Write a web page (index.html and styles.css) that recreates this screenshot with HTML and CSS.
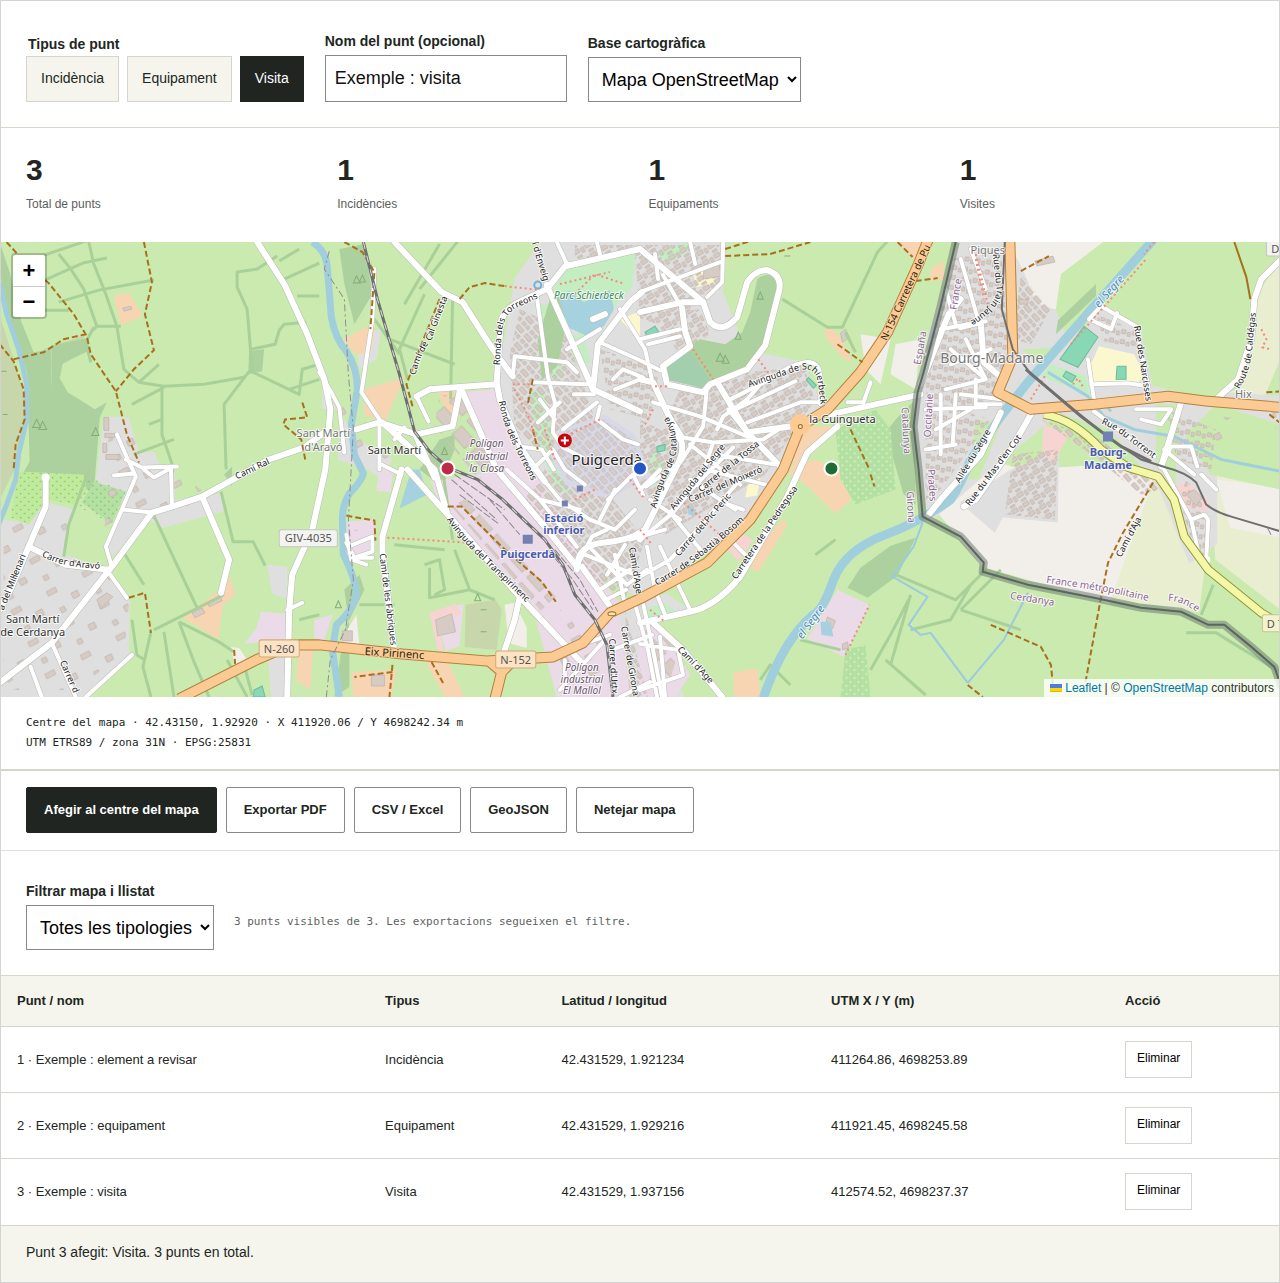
FILE: index.html
```
<!DOCTYPE html>
<html lang="ca">
<head>
<meta charset="utf-8">
<meta name="viewport" content="width=device-width, initial-scale=1">
<title>Mapa de punts</title>
<link rel="stylesheet" href="styles.css">
</head>
<body>
<main class="app">
  <form class="setup">
    <fieldset class="field types">
      <legend>Tipus de punt</legend>
      <div class="type-list">
        <button type="button" class="type">Incidència</button>
        <button type="button" class="type">Equipament</button>
        <button type="button" class="type type-on" aria-pressed="true">Visita</button>
      </div>
    </fieldset>
    <div class="field">
      <label for="nom">Nom del punt (opcional)</label>
      <input id="nom" class="text-box" type="text" value="Exemple : visita">
    </div>
    <div class="field">
      <label for="base">Base cartogràfica</label>
      <select id="base" class="select select-base"><option>Mapa OpenStreetMap</option></select>
    </div>
  </form>

  <section class="stats">
    <div class="stat"><strong>3</strong><span>Total de punts</span></div>
    <div class="stat"><strong>1</strong><span>Incidències</span></div>
    <div class="stat"><strong>1</strong><span>Equipaments</span></div>
    <div class="stat"><strong>1</strong><span>Visites</span></div>
  </section>

  <section class="map" aria-label="Mapa">
    <svg class="map-canvas" viewBox="1 243 1278 454" preserveAspectRatio="xMidYMid slice">
      <defs>
        <pattern id="b1" width="13" height="11" patternUnits="userSpaceOnUse" patternTransform="rotate(-32)"><path class="bld" d="M1 1h6v4h-6zM9 2h3v5h-3zM2 8h5v2h-5z"/></pattern>
        <pattern id="b2" width="12" height="13" patternUnits="userSpaceOnUse" patternTransform="rotate(48)"><path class="bld" d="M1 1h8v4h-8zM2 8h4v3h-4zM8 8h3v3h-3z"/></pattern>
        <pattern id="b3" width="11" height="10" patternUnits="userSpaceOnUse" patternTransform="rotate(8)"><path class="bld" d="M1 1h4v4h-4zM7 3h3v4h-3z"/></pattern>
        <pattern id="b4" width="40" height="36" patternUnits="userSpaceOnUse" patternTransform="rotate(-28)"><path class="bld" d="M4 5h10v5h-10zM25 18h7v6h-7zM8 26h5v5h-5z"/></pattern>
        <pattern id="b5" width="26" height="20" patternUnits="userSpaceOnUse" patternTransform="rotate(48)"><path class="bld" d="M2 2h19v13h-19z"/></pattern>
        <pattern id="dots" width="8" height="8" patternUnits="userSpaceOnUse"><circle cx="2" cy="2" r=".7" fill="#6fa868"/><circle cx="6" cy="6" r=".7" fill="#6fa868"/></pattern>
        <pattern id="wdots" width="8" height="8" patternUnits="userSpaceOnUse"><circle cx="2" cy="2" r=".8" fill="#e6f5da"/><circle cx="6" cy="6" r=".8" fill="#e6f5da"/></pattern>
      </defs>
      <rect class="field-green" x="1" y="243" width="1278" height="454"/>

      <!-- land cover -->
      <g class="scrub">
        <path d="M1 315l14 45 12 40-1 25-10 45-15 30zM45 350l40-14 5 14-38 22-20 30-2-25zM466 605l30-5 6 10-5 40-32-3z"/>
      </g>
      <g class="wood">
        <path d="M1 243l10 30 12 50 12 30 17-3 1 37-22 5-3-20-8-25-11-35-8-40z"/>
        <path d="M29 392l24-6 0-40 36-7 2 12-27 13-3 15 8 14 27 17 12-7-7 15-6 75-22-10-56 4 14-25z"/>
        <path d="M250 352l15-2-2 22-14 3zM340 250l25-5 8 50-18 30-10-40zM420 470l20-30 15-5 0 15-10 25 5 18zM895 420l20-20 0 105-12-10-18-62zM345 590l15-15 5 15-20 40-10 67 15-10 0-60zM225 475l8-8v20z"/>
      </g>
      <path class="farm" d="M1153 478l18 22 12 40 20 32-5 40-100-14 12-55zM1262 400l17 5v205l-65-50-4-80-10-100 40-60 39-60v100z" opacity=".9"/>
      <path class="bare" d="M1012 243h90l-42 32-5 35-20-2-15-30-8-10zM960 450l60 20 85-5 48 14-45 125-126-37-52-62zM505 605l10-2 12 25 0 20-18-5zM345 635l12-20 3 30-20 3zM1215 480l64 8v50l-50-10zM895 345l25-5-5 50-25-15zM860 335l30 5-10 45-15-15zM232 647l8 1 10 15-14 5z"/>
      <g class="res">
        <path d="M1 520l27 3 20-20 27 7-9 45 45 15 20 28-1 57-45 42H1zM105 417l25 1 10 34 16 1 5 14 15 0 0 33 48-6 0 18-60 16-15-8-34 36-8-6 18-45-28-25z"/>
        <path d="M537 243h190l-4 50 20 52 60 18 18 40-35 66-42 58-104 72-86-50-54-80-15-60 20-70 10-60 25-35z"/>
        <path d="M557 697l50-95 60-8 22 16-38 16 33 71zM357 335l25-5-5 30-17 10zM323 385l15 25 20 30 35 20-10 20-15-10-30-10 5-50-20 0zM268 565l20 2v32l-15-5zM268 645l20-10-2 62h-14z"/>
        <path d="M958 243h50l15 30 12 30 20 8 10 25 30-32 44 23 12 60 60 5 75 5-30 25-30-8-10 50 0 80-28 20-30-75-50-60-50-15-60 50-70 60-10-70-5-50 15-70z"/>
        <path d="M1010 470l48-22-1 75-55-5-8 15-35-30zM1245 405h34v20l-30 5z"/>
      </g>
      <g class="field-green">
        <path d="M1108 243h171v15l-22 25-7 62-15 45-25 10-52-12-8-60-44-24-28 30-6-25 8-40zM1155 405l25 0-5 60 0 20-20-20zM1215 405l64 20v65l-70-15-25-40zM975 420l25 5-22 55-10 0zM430 400l35 0-8 24-30 4zM1021 350l40-2-20 22zM780 300l20 62-38-8z"/>
      </g>
      <g class="ind">
        <path d="M461 393l36-3 20 40 30 65 25 45 45 60 12 97h-72l-23-85-88-95-15-35 60-10zM348 522l28-2-2 40-28-5zM262 612l26 2-3 25-40 5 12-15zM837 590l32 15-25 52-37-18zM380 470l14-1-3 24-14-2zM436 612l28-8-4 42-14 5zM315 620l18-5-8 25h-10zM640 625l20 0 30 50-15 22h-38z"/>
      </g>
      <path class="retail" d="M430 613l26-9 6 10-22 10 4 28-6-2zM1175 485l15 0 18 17-2 10-25-5zM1043 425l25 10-15 28-12-10zM735 530l18 10-15 22-12-15z"/>
      <path class="yard" d="M115 297l15-3 14 23-22 9zM362 330l14-5-5 30-15 0-12-15zM365 390l40-12-20 45-20-8zM455 392h-17l15 33zM184 618l37-28 10-13 5 18-12 10-5 34zM352 672l45-2-5 27h-38zM425 660l20-5 20 42h-20zM742 565l40-45 6 4-30 48zM785 470l30-10 22 10 14 30-16 14-25-25zM300 640l14 5-3 45-14-10zM733 673l24-5 3 29h-26zM825 328l12 5 15 30-10-5-17-20zM895 243l35 0-8 25zM930 270l12-8 2 18-15 2zM800 427l35 0-30 30-15 20z"/>
      <path class="park" d="M553 290l17-24 66-12-4 34-34 38-14 18-18-30zM652 450l12 15-5 30-10-20zM640 610l25-7 10 8-25 15zM1050 365l35 12 5 20-50-20zM530 390l15 5 10 50 15 50-15-5-20-60zM540 305l12 0 12 75-22-5zM564 330l20 10 8 25-18-5zM655 255l30-12 10 5-25 15z"/>
      <path class="school" d="M1098 347l35 8 10 20-5 8h-45l-6-12zM693 273l25-8-2 20-20 3zM748 484l12-6-3 18-12 2zM620 320l20-8v30z"/>
      <path class="orchard-a" d="M20 472l65 3 3 15-10 15-30-5-18 25-18-7z"/>
      <path class="orchard-b" d="M95 482l32 10-14 32-30-21zM835 430l40-20 15 20 5 60-40 15-15-25zM845 650l20-5 5 52h-30z"/>
      <path fill="url(#dots)" d="M20 472l65 3 42 17-14 32-40-20-25-4-18 25-18-7z"/>
      <path fill="url(#wdots)" d="M835 430l40-20 15 20 5 60-40 15-15-25zM845 650l20-5 5 52h-30z"/>

      <!-- buildings -->
      <path fill="url(#b1)" d="M575 246h145v45l-20 5-25 35-35-12-5-65-60 8zM650 315l50-5 10 25-30 20zM680 390l120-25 15 35-50 75-100 60-25-60zM640 420l40 20-10 50-30 0zM745 373l60-5 5 30-60 25zM1012 455l45-5-3 70-50-5z"/>
      <path fill="url(#b2)" d="M520 310l45 20 30 90-20 60-60-50-5-75zM545 470l60 20 40 50-20 60-60-40-40-60zM1040 420l60 20 60 50-20 5-50-40zM1020 275l30 35-20 35-18-5zM625 610l25 95h-20z"/>
      <path fill="url(#b3)" d="M950 260l50-10 8 100-15 50-65 20-5-60 20-60zM925 400l65 20-50 70-15 10zM1165 410l50 20-5 40-35-10zM1185 480l15 20 8 60-15-10-15-50zM600 350l60 20-10 50-40-10zM1095 315l38 15 5 20-35-8z"/>
      <path fill="url(#b4)" d="M5 525l65-10-5 45 45 15 20 30-5 50-50 35H5zM110 425l25 5 10 30 30 10 40 30-60 20-20-10-30 40zM335 400l40 30 15 30-45-8zM350 530l20 0v30zM1245 405l30 5v20zM1180 410l60 10-20 25zM560 610l45 20-5 55-40-20z"/>
      <path fill="url(#b5)" d="M452 507l14-8 90 98-15 14zM440 396l20 0 35 60-15 25-45-55zM645 630l35 15-10 35-20 0z"/>
      <path class="core" d="M560 430l45-15 30 20 15 40-40 25-45-15-15-30z"/>
      <path fill="url(#b2)" opacity=".8" d="M565 432l40-12 28 20 10 35-35 20-40-15-12-25z"/>
      <path class="bld" d="M124 309l8-2 1 3-8 2zM105 418h5v13h-5zM106 434h10v4h-10zM104 444h4v9h-4zM107 455h13v5h-13zM209 602l12-6 2 5-13 6zM193 613l10-5 3 5-10 5zM98 600l10-7 6 4-12 12zM372 675h13v11h-13zM436 620l16-6 4 18-18 4zM343 631h10v10h-10zM704 268l15-2 2 11-18 3zM1034 262l18-5 2 6-18 4zM1018 300l9 0v5h-9zM1185 495l8-5 8 8-6 8zM840 334l5-4 4 8-7 5zM827 617l8 4-3 8-7-4zM842 644l5-2 1 6-6 2z"/>

      <!-- woods and water inside the towns -->
      <path class="wood" d="M757 280q8-6 16-3l4 8-2 22-15 46-12 18-38 12-42-2-5-13 27-22 10-6 25 5 17-12 8-20zM550 300l14-4 2 30-8 40-16 15-4-40zM1055 335l40-38 0-12-38 36z"/>
      <path class="park-dark" d="M666 366l25-14 20 32-8 5-34-8z"/>
      <path class="wood" d="M860 568l30-22 25-8 -18 38-30 22-20-10z"/>
      <path class="water" d="M558 295l12-3 14 11 26-12 4 19-10 17-16 10-20-9zM412 470l8 0 8 25-28 14zM820 622l10 0 3 15-12-2zM688 507l6 0 0 9-6-1z"/>
      <path class="pitch" d="M1083 327l14 11-20 30-18-8zM1116 367l9 0v13h-10zM645 333l10-6 4 6-11 6zM1065 372l10 5-4 6-9-6zM808 378l8 8-3 3-7-8zM657 447l8-2v6l-8 2zM255 690l8-4 3 11h-12z"/>

      <!-- hedges -->
      <g class="hedge">
        <path d="M90 243l5 22 12 30 11 32 7 43 15 13 25 4 40-2 40-7 8-8-5-60-10-22 0-15 20-3 20-13M60 255l12 15 13 20 13 37h24M46 256l44-15M46 281l38-17 24-5M60 303l40-12 55-10M40 311l30 0M95 328l-8 15 5 20M98 327l-5 5M252 372l48 23 3-25 17-5M252 350l24-5 4-14 5-6 22-2M285 280l35-16M298 297h22M280 262l20-12M250 372l-25 33 2 65M163 386v49l12 35M165 388l-32 17M140 383l20-18M163 420l-13 5M175 440l-40 15M320 380l-30 10"/>
        <path d="M90 470l-20 55-5 32M125 553l20 32M155 516l43 92M152 632l-8 35 8 30M165 632l10 65M180 622l15 40 15 35M155 630l70-35M180 622l40 20 15 10M222 492l12 50 20 0 12 24M245 665l8 30M133 620l5 35 8 5M320 615l-20 5M228 660l20 37" />
        <path d="M420 290l40-50M425 295l-25 55 8 30M390 340l65 25M453 300l-2 100M440 245l-35 60M375 320l25 35M443 470l10 70M425 565l15-5 5 30-10 5M430 568v30l40-8 -15-40M470 590l25 10M395 545l50 5M360 605l35 0"/>
        <path d="M782 300l45 28 15 0 35-75 12-13M845 333l10 20M835 540l-20 15M895 575l60 25 30-30M870 670l20-35 18-35M885 660l40 35M890 665l20-70M910 630l40-10 20-35M1000 570l-40 40M760 680l10-15 20 20M800 640l40 10M1200 615l12-30M1185 633l30 0 65 40M960 610l60 20"/>
      </g>
      <path class="tree" d="M34 428l4-8 4 8zM40 430l4-8 4 8zM93 436l4-8 3 8zM354 284l3-7 4 7zM360 283l3-7 3 7zM442 455l3-7 3 7zM716 362l4-8 4 8zM722 364l3-8 4 8zM757 300l3-7 3 7zM735 340l3-7 3 7zM3 372h5M4 415h5M481 610h6M481 632h6M784 257h6M336 608l3-7 3 7zM475 601l3-7 3 7z"/>

      <!-- rivers -->
      <g class="river">
        <path class="w4" d="M1 283l7 32 12 35 8 35v35l-8 35-3 25-9 25-8 20"/>
        <path class="w6" d="M313 243Q327 252 328 268L332 318Q336 340 347 352Q358 368 358 390L352 425L355 455L364 474Q362 482 350 494Q343 505 343 520L344 555Q357 580 357 598Q350 614 337 625L333 650L340 697"/>
        <path class="w9" d="M1153 240l-60 67-66 76-27 34-30 43q-10 25-20 40-30 22-65 35-40 15-52 45-10 30-20 35-30 25-50 83"/>
        <path class="w2" d="M1047 373l40 24 16 20 30 13 40 7 47 23 60 12M1100 400l10 12"/>
        <path class="w1" d="M922 523l-9 24-21 30 35 20-19 28 12 10 10-2 37 50M1027 593l-24 47-36 43"/>
      </g>

      <!-- white roads: casing below, fill above -->
      <g class="casing"><use href="#major"/></g>
      <g class="casing-s"><use href="#minor"/></g>
      <g class="street"><g id="minor">
        <path d="M537 297l11 80 7 26-2 30 10 15 20 10M563 430l34-27M533 383l54 2M515 357l-2 20M515 357l52 6 10 10M557 243l10 22M597 243l3 12M600 343l40 18 20 10M600 407l-3 13 26 20 15 5M560 403l-22 20M540 400l15 20M567 350l33-20M613 380l10-10 20 8M574 395h20M640 380l-25 10M655 255l3 25M663 276l20 35M640 293l80-30M723 243l-1 40-15 15M690 243l5 22M640 340l40-10M620 310l25 40 8 35M648 345l32-8"/>
        <path d="M653 403l47 14 47 20M667 413l16 25 30 5 50-3 20-13M707 387l-4 40-22 35-35 25M717 430l6-13 24-17 20-23M747 423l53-20h20M730 400l50-25M735 410l60-28M780 373q20-12 30-10t10 15v27M847 403h16l7-20M713 443l-10 30-33 40 33 40M660 470l-20 20M690 480l45 30M723 503l20 7M730 540l17 17M640 577l30-17 27-30 43-50M647 547l8 43 10 25M660 547l17 36 13 27M643 603l10 47 9 47M636 608l12 42 9 47M640 690l43-15-5-25-38-6M640 540l33-27 20-25 40-40M728 410l20 25M705 470l60 15M715 455l60 10M650 500l30 20M630 540l35-10M690 445l50 40"/>
        <path d="M507 470l33 30 37 47M523 455l37 45 30 20 25 10 20-20M533 470l20-20 12 20 20 15M608 500l25-25 10 20M600 520l15-30M577 567l15-30 15-7M592 550l35 35 20-15M600 590l30-20M585 555l55 22M606 600l20-10M540 500l40 10M625 545l-18 30M615 555l10 50M520 447l22 3 12 20"/>
        <path d="M127 460l16 8 35-1M173 507l-1-37M123 510l30 3M113 567l-6-20 16-37 14-33-9-19-10-23M110 573l18 25M53 643l24 54M32 667l11 30M87 697l46-42M145 470l10 8 18-10M115 476l20-2M375 270l-2 50-11 73 18 27 0 50M320 373l12 20 8 15 5 45M417 397l12 25M347 543l8 15 18-6 0-15-24 10M355 558l18 0M347 535l5 25 15 5M402 475l-20-10M395 440l10-12M288 610l15-7M565 650l45-15M560 690l45-50M565 660v30M612 650l40-15M665 697l-5-60M620 697l30-15"/>
        <path d="M1088 320l12-13 35 20 12 60-20-3-37 1M1088 320l22 10 6-16M1087 360l6 40M960 260l20 70M970 250l15 40M945 290l10 35M940 330l45-8M950 350l35 30-40 10M965 340l20 40M925 410l60-2M935 430l35-20M940 395v60M955 395l-3 50M925 450l30-5M975 380v25h25M990 350l-40 15M1135 410l35 0-10 15-20-5M1160 467l10-20 20 0 6 20M1163 470l27 50 8 37M1190 520l13-5 4 5-2 40M1200 475l15 15M1093 412l60 45M1045 408l30 18 25 20M960 395l40 5M1163 450l30 25"/>
      </g></g>
      <g class="road"><g id="major">
        <path d="M258 243l27 42 23 50 17 45 6 30-5 60-13 60-20 45-3 35-2 87"/>
        <path d="M395 243l47 50 21 10 30 47 20 27M547 290l-28 13q-15 8-18 20l-4 60 3 17 20 47 25 35M430 390l67-5M417 397l13-7M460 392l-7 35-36 8-37-12-23 7M463 393l34 77 48 57 32 40M383 423l52 47 13 45 72 82 62 66M408 470l40 45M402 470l-19 67v16l12 100M520 597l-5 23-11 33M415 433l20 45"/>
        <path d="M567 267l73-17 63 53M547 290l20-25M547 286l46 104 47 22M593 390l5-45 32-42 12-10M593 320l12-5"/>
        <path d="M640 313l43-10h20l7 20q12 12 27-5l10-35q8-12 20-12 15 5 12 20l-14 55-18 24-37 15-7 8-36-8-4-18 27-20-5-15-3-23M640 380l13 3 14 30 12 25q8 10-4 32l-20 40-15 30M717 383l30 50 36 37M747 433l43-6M577 570q0-25 26-27t40-12M582 567l27 38"/>
        <path d="M830 415l90-20M837 427l-30 26-20 44-47 80q-25 30-50 35l-50 11M653 623l30 27 39 47"/>
        <path d="M1280 260l-20 20-7 20-3 40-13 40-22 20M1180 403l-20 64M960 328l20-5 3 40 17 15M1030 415l-20 35-35 50-12 7M1000 413l-20 42-40 45-12 15M920 385l20-50 8-20 12-15"/>
        <path d="M47 477v30l-17 40-17 40-12 23M30 547l37 18 43 5M1 683l52-40 60-76 40-54 20-6 30-10 67-37 35-12 20-15M203 497l27 63-8 33"/>
      </g></g>
      <circle cx="47" cy="478" r="4" fill="#fff"/><circle cx="1205" cy="560" r="4" fill="#fff"/>

      <!-- classified roads -->
      <path class="yellow-case" d="M1043 415q30 5 57 35l27 18 30 9 16 23 10 37 24 33 53 43 20 12"/>
      <path class="yellow" d="M1043 415q30 5 57 35l27 18 30 9 16 23 10 37 24 33 53 43 20 12"/>
      <g class="orange-case"><use href="#primary"/></g>
      <g class="orange"><g id="primary">
        <path d="M180 699l77-39 35-15h28l83 9 84 7 66-4 30-14 27-30 30-14 67-36 43-43 33-50 17-43 27-17 33-37 27-40 30-66 12-30M495 700l7-28-14-12M502 672l14-14M1009 240l3 117-15 36 33 17 63-5 74-8 40 5 73 6"/>
      </g></g>
      <circle class="orange" cx="800" cy="425" r="6"/>
      <circle class="ring" cx="800" cy="427" r="2"/><ellipse class="ring" cx="612" cy="614" rx="4" ry="2"/>
      <circle cx="538" cy="286" r="3.500" fill="none" stroke="#6fb2dc" stroke-width="2"/>

      <!-- paths and tracks -->
      <g class="track">
        <path d="M8 243l17 19 25 22 25 31 13 22 4 18 25 37 11 43 12 28M145 243l8 40-7 32 9 36-20 19-18 22M15 360l30-7 20-13 22-5M1 345l14 17 10 28 1 30-9 25-2 25M306 460l-4-20-18-15 2-5 22-2-5-15M130 598l16-5 6 40M235 650l1 14M345 243l18 10 12 20-4 57M440 300l-20 50-13 35 6 22M460 300l10-12 15-4 20 3M448 507h14l40 40 40 35 14 20M347 516l28 5 1 20M393 665l-3 32M393 672l-38 5M432 662l12 22M850 430l18 38M870 475l4 12M1152 483l-30 50-15 30-8 40-15 82M990 625l50 22 10 18 2 20M967 685l15 12M725 257l45-2 40-12M725 250l25-8M837 345l25 18M897 243l15 15M915 282l22-3M1020 272l28-15M1265 393l14-1M1268 415l15 12M533 380l-5 25M533 430l5 20"/>
        <path class="solid" d="M1233 243l12 35 4 22"/>
      </g>
      <path class="foot" d="M505 287l35 4M388 538l80 5M513 385l20 0M515 390l15 30 6 20M560 285l50-12M575 295l20-20 30 10M693 350l20 30M1070 345l75-85M1153 243l-10 12M845 655l24-50M680 500l45 40M650 610l15 12M975 255l12 50M600 420l-30 15M630 480l15 20M655 387l12 0M1030 400l15-25M575 500l20-10M545 430l10 30M653 410l-8 15M758 360l15 20M640 530l12 15M975 260l8 40M1072 385l5-6 6 10M1260 330l5 10-4 8 8 2"/>
      <path class="admin" d="M330 252l-5 18 20 30 4 75 5 55-5 90 5 60-8 50-15 30-4 37"/>

      <!-- railways -->
      <g class="rail">
        <path d="M364 243l14 57 22 75 15 57 15 20 18 16 30 12 25 20 24 23 18 17 18 25 12 30 20 25 12 25 6 52"/>
        <path class="thin" d="M1004 243l-3 67 11 40 18 25 40 33 40 32 30 20 25 8q20 5 30 15l10 22q10 8 25 12l50 15"/>
        <path d="M1025 370l55 47 40 30 30 15"/>
      </g>
      <path class="rail-dash" d="M364 243l14 57 22 75 15 57 15 20 18 16 30 12 25 20 24 23 18 17 18 25 12 30 20 25 12 25 6 52"/>
      <path class="siding" d="M455 475l50 35M452 480l45 40M460 495l40 30M490 500l30 35M548 550l25 30 20 30M555 550l25 30 18 32M1266 528l4 8"/>

      <!-- national boundary -->
      <path class="frontier" d="M955 243l-15 64-17 66-6 20-4 34 5 43 4 47 38 20 23 26-1 9 45 13 66 13 47 10 40 4 27 13h16l27 22 23 20 7 20"/>
      <path class="frontier-line" d="M955 243l-15 64-17 66-6 20-4 34 5 43 4 47 38 20 23 26-1 9 45 13 66 13 47 10 40 4 27 13h16l27 22 23 20 7 20"/>

      <!-- street labels -->
      <defs>
        <path id="t1" d="M500 366l2-32q2-18 14-25l22-10"/><path id="t2" d="M499 402q5 24 14 42l22 44"/>
        <path id="t3" d="M416 376q4-20 16-36l16-42"/>
        <path id="t5" d="M43 556q18 12 60 13"/><path id="t6" d="M447 520q15 21 33 38l52 50"/>
        <path id="t7" d="M749 388L790 374Q812 364 817 380L821 410"/><path id="t8" d="M656 509Q662 484 672 466Q681 446 672 424L660 404"/>
        <path id="t9" d="M992 255L996 292Q994 308 966 324"/><path id="t10" d="M1238 390Q1250 370 1251 346L1256 300"/>
        <path id="t11" d="M1045 583l60 9 55 12"/><path id="t12" d="M1167 601q15 0 32 14"/>
        <path id="t13" d="M1100 424q15 6 25 15l30 22"/><path id="t14" d="M657 586q40-22 90-68"/>
      </defs>
      <g class="t street-name">
        <text><textPath href="#t1">Ronda dels Torreons</textPath></text>
        <text><textPath href="#t2">Ronda dels Torreons</textPath></text>
        <text><textPath href="#t3">Camí de Cal Ginesta</textPath></text>
        <text transform="translate(532 244) rotate(73)">í d'Enveig</text>
        <text><textPath href="#t5">Carrer d'Aravó</textPath></text>
        <text><textPath href="#t6">Avinguda del Transpirinenc</textPath></text>
        <text><textPath href="#t7">Avinguda de Schierbeck</textPath></text>
        <text><textPath href="#t8">Avinguda de Catalunya</textPath></text>
        <text><textPath href="#t9">Rue du Train Jaune</textPath></text>
        <text><textPath href="#t10">Route de Caldégas</textPath></text>
        <text><textPath href="#t13">Rue du Torrent</textPath></text>
        <text><textPath href="#t14">Carrer de Sebastià Bosom</textPath></text>
        <text transform="translate(238 480) rotate(-26)">Camí Ral</text>
        <text transform="translate(5 611) rotate(-68)">a del Mil·lenari</text>
        <text transform="translate(61 662) rotate(66)">Carrer d</text>
        <text transform="translate(380 554) rotate(83)">Camí de les Fàbriques</text>
        <text transform="translate(609 639) rotate(87)">Carrer d'Urtx</text>
        <text transform="translate(621 627) rotate(80)">Carrer de Girona</text>
        <text transform="translate(629 548) rotate(81)">Camí d'Age</text>
        <text transform="translate(677 650) rotate(46)">Camí d'Age</text>
        <text transform="translate(674 511) rotate(-51)">Avinguda del Segre</text>
        <text transform="translate(701 493) rotate(-39)">Carrer de la Tossa</text>
        <text transform="translate(690 503) rotate(-23)">Carrer del Moixeró</text>
        <text transform="translate(679 557) rotate(-49)">Carrer del Pic Peric</text>
        <text transform="translate(736 580) rotate(-56)">Carretera de la Pedregosa</text>
        <text transform="translate(1133 327) rotate(81)">Rue des Narcisses</text>
        <text transform="translate(959 484) rotate(-59)">Allée du Sègre</text>
        <text transform="translate(969 507) rotate(-53)">Rue du Mas d'en Cot</text>
        <text transform="translate(1120 558) rotate(-62)">Camí d'Aja</text>
      </g>
      <text class="t road-name" transform="translate(365 655) rotate(4)">Eix Pirinenc</text>
      <text class="t road-name road-steep" transform="translate(886 342) rotate(-65)">N-154 Carretera de Pu</text>
      <g class="t river-name">
        <text transform="translate(1098 309) rotate(-48)">el Segre</text>
        <text transform="translate(802 640) rotate(-54)">el Segre</text>
      </g>
      <g class="t admin-name">
        <text transform="translate(956 311) rotate(-81)">France</text>
        <text transform="translate(920 366) rotate(-80)">España</text>
        <text transform="translate(930 438) rotate(-87)">Occitanie</text>
        <text transform="translate(901 408) rotate(87)">Catalunya</text>
        <text transform="translate(927 470) rotate(86)">Prades</text>
        <text transform="translate(906 492) rotate(87)">Girona</text>
        <text transform="translate(1009 599) rotate(9)">Cerdanya</text>
        <text><textPath href="#t11">France métropolitaine</textPath></text>
        <text><textPath href="#t12">France</textPath></text>
      </g>

      <!-- place labels -->
      <g class="t mid">
        <g class="place-soft"><text x="324" y="438">Sant Martí</text><text x="324" y="452">d'Aravó</text><text x="987" y="255">Piques</text><text x="1242" y="399">Hix</text></g>
        <text class="place-big soft" x="991" y="364">Bourg-Madame</text>
        <g class="place"><text x="395" y="455">Sant Martí</text><text x="842" y="424">la Guingueta</text><text x="34" y="623">Sant Martí</text><text x="34" y="636">de Cerdanya</text></g>
        <text class="place-big" x="607" y="466">Puigcerdà</text>
        <g class="zone"><text x="487" y="448">Polígon</text><text x="487" y="461">industrial</text><text x="487" y="473">la Closa</text><text x="582" y="671">Polígon</text><text x="582" y="683">industrial</text><text x="582" y="694">El Mallol</text></g>
        <text class="park-name" x="589" y="300">Parc Schierbeck</text>
        <g class="station"><text x="564" y="522">Estació</text><text x="564" y="534">inferior</text><text x="528" y="558">Puigcerdà</text><text x="1107" y="457">Bourg-</text><text x="1107" y="470">Madame</text></g>
      </g>
      <path class="stop" d="M523 535h10v9h-10zM562 501h6v6h-6zM577 486h6v6h-6zM1102 432h10v10h-10z"/>
      <circle cx="565" cy="441" r="7" fill="#c4060c"/><path d="M561 441h8M565 437v8" stroke="#fff" stroke-width="2"/>

      <g class="shield">
        <rect x="280" y="530" width="58" height="17" rx="2"/><text x="309" y="542">GIV-4035</text>
        <rect x="1265" y="240" width="24" height="17" rx="2"/><text x="1274" y="254">D</text>
        <rect class="shield-o" x="260" y="640" width="40" height="17" rx="2"/><text x="280" y="653">N-260</text>
        <rect class="shield-o" x="496" y="651" width="40" height="17" rx="2"/><text x="516" y="664">N-152</text>
        <rect class="shield-y" x="1261" y="615" width="30" height="17" rx="2"/><text x="1274" y="628">D 7</text>
      </g>

      <g class="marker">
        <circle cx="448" cy="469" r="7" fill="#bd2948"/>
        <circle cx="640" cy="469" r="7" fill="#2456c6"/>
        <circle cx="831" cy="469" r="7" fill="#1d6b35"/>
      </g>
    </svg>
    <div class="zoom">
      <button type="button" aria-label="Apropar">+</button>
      <button type="button" aria-label="Allunyar">−</button>
    </div>
    <div class="credit">
      <svg class="flag" width="12" height="8" viewBox="0 0 12 8"><path fill="#4c7be1" d="M0 0h12v4H0z"/><path fill="#ffd500" d="M0 4h12v3H0z"/><path fill="#e0bc00" d="M0 7h12v1H0z"/></svg>
      <a href="#leaflet">Leaflet</a> | © <a href="#osm">OpenStreetMap</a> contributors
    </div>
  </section>

  <section class="coords">
    <p>Centre del mapa · 42.43150, 1.92920 · X 411920.06 / Y 4698242.34 m</p>
    <p>UTM ETRS89 / zona 31N · EPSG:25831</p>
  </section>

  <section class="actions">
    <button type="button" class="action action-main">Afegir al centre del mapa</button>
    <button type="button" class="action">Exportar PDF</button>
    <button type="button" class="action">CSV / Excel</button>
    <button type="button" class="action">GeoJSON</button>
    <button type="button" class="action">Netejar mapa</button>
  </section>

  <section class="filter">
    <div class="field">
      <label for="filtre">Filtrar mapa i llistat</label>
      <select id="filtre" class="select select-filter"><option>Totes les tipologies</option></select>
    </div>
    <p class="hint">3 punts visibles de 3. Les exportacions segueixen el filtre.</p>
  </section>

  <table class="points">
    <colgroup><col class="c-name"><col class="c-type"><col class="c-geo"><col class="c-utm"><col></colgroup>
    <thead>
      <tr><th scope="col">Punt / nom</th><th scope="col">Tipus</th><th scope="col">Latitud / longitud</th><th scope="col">UTM X / Y (m)</th><th scope="col">Acció</th></tr>
    </thead>
    <tbody>
      <tr><td>1 · Exemple : element a revisar</td><td>Incidència</td><td>42.431529, 1.921234</td><td>411264.86, 4698253.89</td><td><button type="button" class="remove">Eliminar</button></td></tr>
      <tr><td>2 · Exemple : equipament</td><td>Equipament</td><td>42.431529, 1.929216</td><td>411921.45, 4698245.58</td><td><button type="button" class="remove">Eliminar</button></td></tr>
      <tr><td>3 · Exemple : visita</td><td>Visita</td><td>42.431529, 1.937156</td><td>412574.52, 4698237.37</td><td><button type="button" class="remove">Eliminar</button></td></tr>
    </tbody>
  </table>

  <p class="status" role="status">Punt 3 afegit: Visita. 3 punts en total.</p>
</main>
</body>
</html>
```
FILE: styles.css
```
* { box-sizing: border-box; }

body {
  margin: 0;
  background: #fff;
  color: #212622;
  font: 14px/20px "Liberation Sans", Arial, sans-serif;
}

p { margin: 0; }
button, input, select { font-family: inherit; color: inherit; margin: 0; }

.app { border: 1px solid #d3d4cf; background: #fff; }

/* point set-up */
.setup {
  display: flex;
  flex-wrap: wrap;
  align-items: flex-end;
  gap: 21px;
  padding: 31px 25px 25px;
  border-bottom: 1px solid #d5d6cb;
}
.field { display: flex; flex-direction: column; align-items: flex-start; gap: 5px; }
.field label, .types legend { font-size: 14px; line-height: 18px; font-weight: 700; padding: 0; }
.types { border: 0; margin: 0; padding: 0; min-width: 0; display: block; }
.types legend { padding: 0 0 3px 2px; }
.type-list { display: flex; gap: 8px; }
.type {
  height: 46px;
  padding: 0 14px 3px;
  border: 1px solid #d5d6cb;
  background: #f5f5ee;
  font-size: 14px;
}
.type-on { background: #202521; border-color: #202521; color: #fff; }
.text-box {
  width: 242px;
  height: 47px;
  padding: 0 9px;
  border: 1px solid #868a84;
  background: #fff;
  font-size: 18px;
  color: #111;
}
.select {
  height: 45px;
  padding: 0 0 0 9px;
  border: 1px solid #868a84;
  border-radius: 0;
  background: #fff;
  font-size: 18px;
  color: #000;
}
.select-base { width: 213px; }
.select-filter { width: 188px; }

/* totals */
.stats {
  display: grid;
  grid-template-columns: repeat(4, 1fr);
  gap: 17px;
  padding: 25px 25px 29px;
}
.stat { display: flex; flex-direction: column; gap: 8px; }
.stat strong { font-size: 30px; line-height: 34px; }
.stat span { font-size: 12px; line-height: 18px; color: #5b605b; }

/* map */
.map { position: relative; height: 455px; overflow: hidden; }
.map-canvas { display: block; width: 100%; height: 100%; }
.zoom {
  position: absolute;
  left: 10px;
  top: 11px;
  width: 36px;
  border: 2px solid rgba(0, 0, 0, .2);
  border-radius: 4px;
  background: #fff;
  background-clip: padding-box;
}
.zoom button {
  display: block;
  width: 100%;
  height: 31px;
  padding: 0;
  border: 0;
  background: none;
  color: #000;
  font: 700 22px/30px "Liberation Sans", Arial, sans-serif;
}
.zoom button + button { border-top: 1px solid #ccc; }
.credit {
  position: absolute;
  right: 0;
  bottom: 0;
  padding: 0 5px 0 6px;
  background: rgba(255, 255, 255, .8);
  color: #333;
  font-size: 12px;
  line-height: 18px;
}
.credit a { color: #0078a8; text-decoration: none; }

.field-green { fill: #cbeab0; }
.wood { fill: #add19e; }
.park-dark { fill: #a3cfae; }
.scrub { fill: #c8d7ab; }
.farm { fill: #eceed4; }
.bare { fill: #f2efea; }
.res { fill: #e0dfdf; }
.core { fill: #d9d8e6; }
.ind { fill: #ebdbe8; }
.retail { fill: #f7d4d2; }
.yard { fill: #f8d5b2; }
.park { fill: #c4eec2; }
.pitch { fill: #88d8b5; stroke: #6dbb98; }
.school { fill: #fbf8cf; }
.orchard-a { fill: #c0ea9c; }
.orchard-b { fill: #b4e1a2; }
.water { fill: #a6d1df; }
.bld { fill: #d6cbc5; stroke: #bfb2aa; stroke-width: .7; }
.hedge { fill: none; stroke: #a9d099; stroke-width: 3; stroke-linejoin: round; }
.tree { fill: none; stroke: #82ad7a; stroke-width: 1; }
.river { fill: none; stroke: #a0cedd; stroke-linejoin: round; }
.w1 { stroke-width: 2; stroke: #9dc9e0; }
.w2 { stroke-width: 3; }
.w4 { stroke-width: 5; }
.w6 { stroke-width: 7; }
.w9 { stroke-width: 9; }
.casing, .casing-s, .street, .road { fill: none; stroke-linejoin: round; stroke-linecap: round; }
.casing { stroke: #b9b9b4; stroke-width: 7; }
.casing-s { stroke: #bdbcba; stroke-width: 5; }
.street { stroke: #fff; stroke-width: 4; }
.road { stroke: #fff; stroke-width: 6; }
.orange, .orange-case, .yellow, .yellow-case { fill: none; stroke-linejoin: round; }
.orange-case { stroke: #b5813e; stroke-width: 11; }
.orange { stroke: #fbcb93; stroke-width: 9; }
.yellow-case { stroke: #8f9733; stroke-width: 9; }
.yellow { stroke: #f4f7a8; stroke-width: 7; }
.ring { fill: #fbe3a8; stroke: #8d6e2c; }
.track { fill: none; stroke: #a8701c; stroke-width: 2; stroke-dasharray: 6 3; }
.track .solid { stroke-dasharray: none; }
.foot { fill: none; stroke: #f28a7e; stroke-width: 2; stroke-dasharray: 2 3; }
.admin { fill: none; stroke: #8f8b99; stroke-width: 1; stroke-dasharray: 7 3 2 3; }
.rail { fill: none; stroke: #6f6f6f; stroke-width: 3; }
.rail .thin { stroke-width: 2; }
.rail-dash { fill: none; stroke: #dcdcdc; stroke-width: 1; stroke-dasharray: 7 7; }
.siding { fill: none; stroke: #8c8790; stroke-width: 1; stroke-dasharray: 8 2; }
.frontier { fill: none; stroke: #6f7d72; stroke-opacity: .55; stroke-width: 8; stroke-linejoin: round; }
.frontier-line { fill: none; stroke: #5b665e; stroke-width: 2; }

.t { font-family: "Noto Sans", sans-serif; paint-order: stroke; stroke: rgba(255, 255, 255, .75); stroke-width: 2; stroke-linejoin: round; }
.mid { text-anchor: middle; }
.street-name { font-size: 9px; fill: #222; }
.road-name { font-size: 11px; fill: #2d2416; stroke: #fbcb93; }
.road-steep { font-size: 10px; }
.river-name { font-size: 11px; font-style: italic; fill: #4a88b8; }
.admin-name { font-size: 10px; fill: #8d6594; }
.place { font-size: 11px; fill: #333; }
.place-soft { font-size: 11px; fill: #777; }
.place-big { font-size: 15px; fill: #222; }
.soft { font-size: 14px; fill: #777; }
.zone { font-size: 10px; font-style: italic; fill: #6a5670; }
.park-name { font-size: 10px; font-style: italic; fill: #3d8b57; }
.station { font-size: 11px; font-weight: 700; fill: #4a5bb0; }
.stop { fill: #7480b4; }
.shield { font-family: "Noto Sans", sans-serif; font-size: 11px; text-anchor: middle; fill: #555; }
.shield rect { fill: #f3f3f0; stroke: #c5c5bf; }
.shield .shield-o { fill: #fbe3c4; stroke: #d2aa7b; }
.shield .shield-y { fill: #f5f3cf; stroke: #c3c49a; }
.marker { stroke: #fff; stroke-width: 2; }

/* centre coordinates */
.coords {
  padding: 16px 25px;
  border-bottom: 2px solid #d5d6cb;
  font: 11px/20px "DejaVu Sans Mono", monospace;
}

/* actions */
.actions {
  display: flex;
  flex-wrap: wrap;
  gap: 9px;
  padding: 16px 25px 17px;
  border-bottom: 1px solid #dfe0db;
}
.action {
  height: 46px;
  padding: 0 17px 2px;
  border: 1px solid #868a84;
  border-radius: 2px;
  background: #fff;
  font-size: 13px;
  font-weight: 700;
}
.action-main { background: #202521; border-color: #202521; color: #fff; }

/* filter */
.filter {
  display: flex;
  flex-wrap: wrap;
  align-items: flex-end;
  gap: 20px;
  padding: 31px 25px 25px;
}
.hint { padding-bottom: 18px; font: 11px/20px "DejaVu Sans Mono", monospace; color: #5f645f; }

/* points table */
.points { width: 100%; border-collapse: collapse; table-layout: fixed; font-size: 13px; }
.c-name { width: 28.800%; }
.c-type { width: 13.800%; }
.c-geo { width: 21.100%; }
.c-utm { width: 23%; }
.points th, .points td { padding: 0 16px; text-align: left; }
.points th { height: 51px; background: #f5f5ee; border-top: 1px solid #d5d6cb; }
.points td { height: 66px; border-top: 1px solid #d5d6cb; }
.remove {
  height: 37px;
  padding: 0 11px 3px;
  border: 1px solid #d5d6cb;
  background: #fff;
  font-size: 12px;
  color: #000;
}

.status {
  padding: 16px 25px 20px;
  border-top: 1px solid #d5d6cb;
  background: #f5f5ee;
}
```
